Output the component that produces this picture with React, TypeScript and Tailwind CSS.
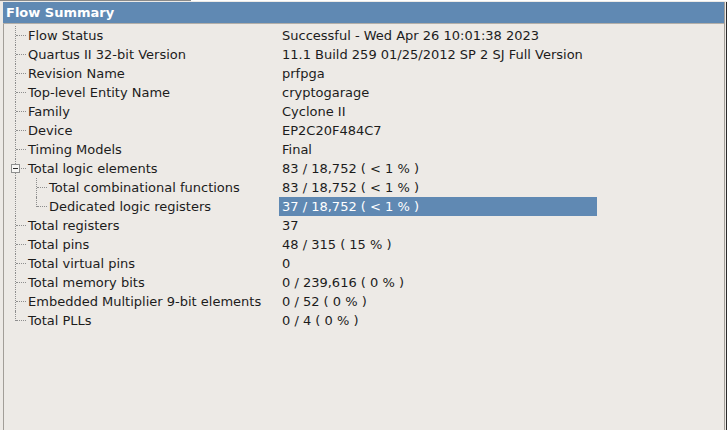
import React from "react";

type Row = {
  label: string;
  value: string;
  level?: number;
  expander?: boolean;
  selected?: boolean;
};

const rows: Row[] = [
  { label: "Flow Status", value: "Successful - Wed Apr 26 10:01:38 2023" },
  { label: "Quartus II 32-bit Version", value: "11.1 Build 259 01/25/2012 SP 2 SJ Full Version" },
  { label: "Revision Name", value: "prfpga" },
  { label: "Top-level Entity Name", value: "cryptogarage" },
  { label: "Family", value: "Cyclone II" },
  { label: "Device", value: "EP2C20F484C7" },
  { label: "Timing Models", value: "Final" },
  { label: "Total logic elements", value: "83 / 18,752 ( < 1 % )", expander: true },
  { label: "Total combinational functions", value: "83 / 18,752 ( < 1 % )", level: 1 },
  { label: "Dedicated logic registers", value: "37 / 18,752 ( < 1 % )", level: 1, selected: true },
  { label: "Total registers", value: "37" },
  { label: "Total pins", value: "48 / 315 ( 15 % )" },
  { label: "Total virtual pins", value: "0" },
  { label: "Total memory bits", value: "0 / 239,616 ( 0 % )" },
  { label: "Embedded Multiplier 9-bit elements", value: "0 / 52 ( 0 % )" },
  { label: "Total PLLs", value: "0 / 4 ( 0 % )" },
];

function TreeRow({ row, first, last, lastChild }: { row: Row; first: boolean; last: boolean; lastChild: boolean }) {
  const child = row.level === 1;
  return (
    <div className="relative flex h-[19px] items-center">
      {/* level 0 trunk */}
      <span
        className={
          "absolute left-[11px] border-l border-dotted border-[#8e8e8e] " +
          (last ? "top-0 h-[10px]" : first ? "top-0 bottom-0" : "top-0 bottom-0")
        }
      />
      {!child && (
        <span className="absolute left-[12px] top-[9px] w-[10px] border-t border-dotted border-[#8e8e8e]" />
      )}
      {child && (
        <>
          <span
            className={
              "absolute left-[32px] top-0 border-l border-dotted border-[#8e8e8e] " +
              (lastChild ? "h-[10px]" : "bottom-0")
            }
          />
          <span className="absolute left-[33px] top-[9px] w-[10px] border-t border-dotted border-[#8e8e8e]" />
        </>
      )}
      {row.expander && (
        <span className="absolute left-[7px] top-[5px] flex h-[9px] w-[9px] items-center justify-center border border-[#8e8e8e] bg-[#f7f6f4]">
          <span className="h-px w-[5px] bg-[#2a2a2a]" />
        </span>
      )}
      <div className={"w-[275px] shrink-0 truncate " + (child ? "pl-[45px]" : "pl-[24px]")}>{row.label}</div>
      <div
        className={
          "flex h-[19px] w-[318px] items-center pl-[3px] " +
          (row.selected ? "bg-[#6089b3] text-white" : "")
        }
      >
        {row.value}
      </div>
    </div>
  );
}

export default function App() {
  const lastChildIdx = rows.map((r) => r.level === 1).lastIndexOf(true);
  return (
    <div
      className="flex h-[430px] w-[727px] flex-col overflow-hidden bg-[#edeae6] text-[13px] text-[#1c1c1c]"
      style={{ fontFamily: '"DejaVu Sans", sans-serif' }}
    >
      <div className="flex h-px shrink-0">
        <div className="w-[191px] bg-[#8a8a8a]" />
        <div className="flex-1 bg-white" />
      </div>
      <div className="h-px shrink-0" />
      <div className="flex flex-1">
        <div className="w-[3px] shrink-0" />
        <div className="flex flex-1 flex-col">
          <div className="flex h-[21px] shrink-0 items-center bg-[#6089b3] pl-[3px] font-bold text-white">
            Flow Summary
          </div>
          <div className="h-px shrink-0 bg-[#b3afa9]" />
          <div className="flex flex-1 flex-col border-l border-[#a29e98] pt-[2px]">
            {rows.map((r, i) => (
              <TreeRow key={r.label} row={r} first={i === 0} last={i === rows.length - 1} lastChild={i === lastChildIdx} />
            ))}
          </div>
        </div>
        <div className="w-px shrink-0 bg-[#a29e98]" />
        <div className="w-px shrink-0 bg-[#efebe7]" />
        <div className="w-px shrink-0 bg-[#2b2b2b]" />
      </div>
    </div>
  );
}
